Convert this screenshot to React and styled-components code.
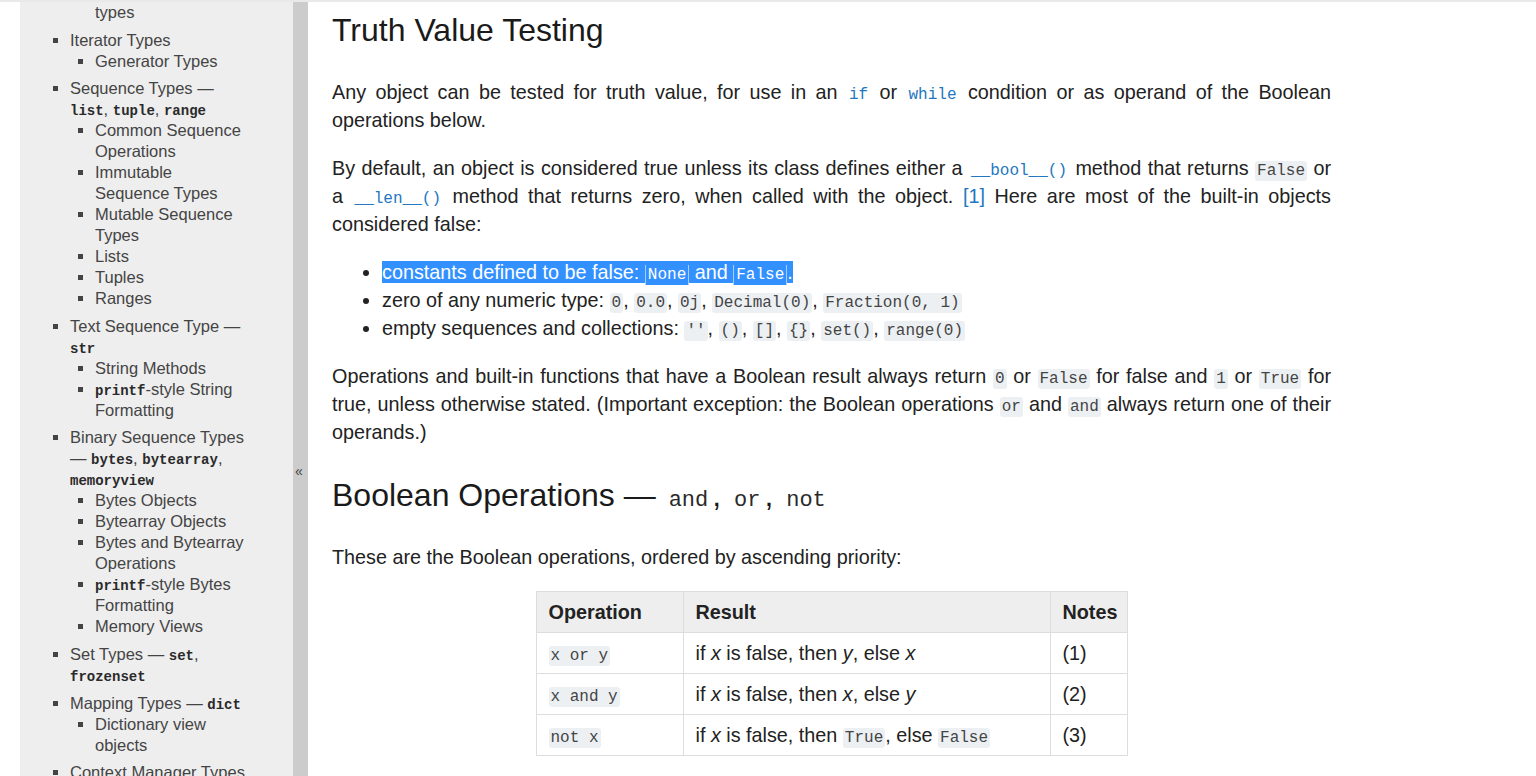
import React, { useLayoutEffect, useRef } from "react";
import styled, { createGlobalStyle } from "styled-components";

const GlobalStyle = createGlobalStyle`
  html, body { margin: 0; padding: 0; background: #ffffff; overflow: hidden; }
  body { font-family: "Liberation Sans", Arial, sans-serif; }
`;

const Page = styled.div`
  width: 100vw;
  height: 100vh;
  display: flex;
  flex-direction: column;
  overflow: hidden;
`;

const TopStrip = styled.div`
  height: 2px;
  flex: none;
  background: #e9e9e9;
`;

const Layout = styled.div`
  flex: 1;
  min-height: 0;
  display: flex;
  padding-left: 20px;
`;

const Sidebar = styled.nav`
  width: 273px;
  flex: none;
  box-sizing: border-box;
  background: #eeeeee;
  overflow: hidden;
  padding: 0 43px 0 10px;
  color: #444444;
  font-size: 16.5px;
  line-height: 21px;
`;

const TocList = styled.ul`
  margin: 0;
  padding-left: ${(p) => (p.$level === 0 ? "40px" : "25px")};
  list-style: square;
`;

const TocItem = styled.li`
  margin-top: ${(p) => (p.$spaced ? "6.6px" : "0")};
`;

const SideCode = styled.code`
  font-family: "Liberation Mono", "Courier New", monospace;
  font-size: 14px;
  line-height: 1;
  font-weight: 700;
  color: #2a2a2a;
`;

const CollapseBar = styled.div`
  width: 15px;
  flex: none;
  background: #cccccc;
  color: #444444;
  font-size: 14px;
  line-height: 16px;
  padding: 461px 0 0 2px;
  box-sizing: border-box;
`;

const Main = styled.main`
  flex: 1;
  min-width: 0;
  padding: 0 24px;
  overflow: hidden;
  color: #222222;
`;

const Body = styled.div`
  width: 999px;
`;

const Heading = styled.h1`
  font-size: 32px;
  font-weight: 400;
  line-height: 36px;
  color: #1a1a1a;
  margin: ${(p) => (p.$first ? "10px 0 30px" : "31px 0 30px")};
`;

const Para = styled.p`
  font-size: 19.8px;
  line-height: 28px;
  margin: 20px 0;
  text-align: justify;
`;

const BulletList = styled.ul`
  font-size: 19.8px;
  line-height: 28px;
  margin: 20px 0;
  padding-left: 50px;
  list-style: disc;
`;

const Code = styled.code`
  font-family: "Liberation Mono", "Courier New", monospace;
  font-size: 16px;
  line-height: 1;
  padding: 1px 2px;
  border-radius: 3px;
  background: ${(p) => (p.$bare ? "transparent" : "#ecf0f3")};
  color: ${(p) => (p.$bare ? "inherit" : "#444444")};
`;

const HeadCode = styled.code`
  font-family: "Liberation Mono", "Courier New", monospace;
  font-size: 22px;
  line-height: 1;
  padding: 0 4px;
  color: #2a2a2a;
`;

const Link = styled.a`
  color: #2277c0;
  text-decoration: none;
`;

const Selected = styled.span`
  background: #3390ff;
  color: #ffffff;
`;

const SelCode = styled.code`
  font-family: "Liberation Mono", "Courier New", monospace;
  font-size: 16px;
  line-height: 1;
  padding: 1px 2px;
  background: #3390ff;
  color: #ffffff;
  border-left: 1px solid #a8cdfb;
  border-right: 1px solid #a8cdfb;
`;

const Table = styled.table`
  margin: 20px auto;
  border-collapse: collapse;
  table-layout: fixed;
  width: 591px;
  border: 1px solid #dddddd;
  font-size: 19.8px;
  line-height: 28px;
`;

const Th = styled.th`
  width: ${(p) => p.$w - 25}px;
  background: #eeeeee;
  font-weight: 700;
  text-align: left;
  padding: 6px 12px;
  border: 1px solid #dddddd;
  white-space: nowrap;
  color: #222222;
`;

const Td = styled.td`
  padding: 6px 12px;
  border: 1px solid #dddddd;
  white-space: nowrap;
  vertical-align: middle;
`;

const c = (t) => <SideCode>{t}</SideCode>;

const toc = [
  {
    title: ["Numeric Types — ", c("int"), ", ", c("float"), ", ", c("complex")],
    children: [
      "Bitwise Operations on Integer Types",
      "Additional Methods on Integer Types",
      "Additional Methods on Float",
      "Hashing of numeric types",
    ],
  },
  { title: "Iterator Types", children: ["Generator Types"], anchor: true },
  {
    title: ["Sequence Types — ", c("list"), ", ", c("tuple"), ", ", c("range")],
    children: [
      "Common Sequence Operations",
      "Immutable Sequence Types",
      "Mutable Sequence Types",
      "Lists",
      "Tuples",
      "Ranges",
    ],
  },
  {
    title: ["Text Sequence Type — ", c("str")],
    children: ["String Methods", [c("printf"), "-style String Formatting"]],
  },
  {
    title: ["Binary Sequence Types — ", c("bytes"), ", ", c("bytearray"), ", ", c("memoryview")],
    children: [
      "Bytes Objects",
      "Bytearray Objects",
      "Bytes and Bytearray Operations",
      [c("printf"), "-style Bytes Formatting"],
      "Memory Views",
    ],
  },
  { title: ["Set Types — ", c("set"), ", ", c("frozenset")] },
  { title: ["Mapping Types — ", c("dict")], children: ["Dictionary view objects"] },
  { title: "Context Manager Types" },
  {
    title: "Type Annotation Types — Generic Alias, Union",
    children: ["Generic Alias Type", "Union Type"],
  },
  {
    title: "Other Built-in Types",
    children: ["Modules", "Classes and Class Instances", "Functions", "Methods", "Code Objects"],
  },
  { title: "Special Attributes" },
];

function Frag({ v }) {
  if (Array.isArray(v)) return v.map((x, i) => <React.Fragment key={i}>{x}</React.Fragment>);
  return v;
}

export default function App() {
  const navRef = useRef(null);
  const anchorRef = useRef(null);

  useLayoutEffect(() => {
    const nav = navRef.current;
    const a = anchorRef.current;
    if (!nav || !a) return;
    const offset = a.getBoundingClientRect().top - nav.getBoundingClientRect().top + nav.scrollTop;
    nav.scrollTop = Math.round(offset - 28);
  }, []);

  return (
    <>
      <GlobalStyle />
      <Page>
        <TopStrip />
        <Layout>
          <Sidebar ref={navRef}>
            <TocList $level={0}>
              {toc.map((item, i) => (
                <TocItem
                  key={i}
                  $spaced={i > 0}
                  ref={item.anchor ? anchorRef : undefined}
                >
                  <Frag v={item.title} />
                  {item.children && (
                    <TocList $level={1}>
                      {item.children.map((ch, j) => (
                        <TocItem key={j}>
                          <Frag v={ch} />
                        </TocItem>
                      ))}
                    </TocList>
                  )}
                </TocItem>
              ))}
            </TocList>
          </Sidebar>
          <CollapseBar>«</CollapseBar>
          <Main>
            <Body>
              <Heading $first>Truth Value Testing</Heading>
              <Para>
                Any object can be tested for truth value, for use in an{" "}
                <Link href="#"><Code $bare>if</Code></Link> or{" "}
                <Link href="#"><Code $bare>while</Code></Link> condition or as operand of the
                Boolean operations below.
              </Para>
              <Para>
                By default, an object is considered true unless its class defines either a{" "}
                <Link href="#"><Code $bare>__bool__()</Code></Link> method that returns{" "}
                <Code>False</Code> or a{"\u00a0"}
                <Link href="#"><Code $bare>__len__()</Code></Link> method that returns zero, when
                called with the object. <Link href="#">[1]</Link> Here are most of the built-in
                objects considered false:
              </Para>
              <BulletList>
                <li>
                  <Selected>
                    constants defined to be false: <SelCode>None</SelCode> and{" "}
                    <SelCode>False</SelCode>.
                  </Selected>
                </li>
                <li>
                  zero of any numeric type: <Code>0</Code>, <Code>0.0</Code>, <Code>0j</Code>,{" "}
                  <Code>Decimal(0)</Code>, <Code>Fraction(0, 1)</Code>
                </li>
                <li>
                  empty sequences and collections: <Code>''</Code>, <Code>()</Code>,{" "}
                  <Code>[]</Code>, <Code>{"{}"}</Code>, <Code>set()</Code>, <Code>range(0)</Code>
                </li>
              </BulletList>
              <Para>
                Operations and built-in functions that have a Boolean result always return{" "}
                <Code>0</Code> or <Code>False</Code> for false and <Code>1</Code> or{" "}
                <Code>True</Code> for true, unless otherwise stated. (Important exception: the
                Boolean operations <Code>or</Code> and <Code>and</Code> always return one of their
                operands.)
              </Para>
              <Heading as="h2">
                Boolean Operations — <HeadCode>and</HeadCode>, <HeadCode>or</HeadCode>,{" "}
                <HeadCode>not</HeadCode>
              </Heading>
              <Para>These are the Boolean operations, ordered by ascending priority:</Para>
              <Table>
                <thead>
                  <tr>
                    <Th $w={147}>Operation</Th>
                    <Th $w={367}>Result</Th>
                    <Th $w={77}>Notes</Th>
                  </tr>
                </thead>
                <tbody>
                  <tr>
                    <Td><Code>x or y</Code></Td>
                    <Td>if <em>x</em> is false, then <em>y</em>, else <em>x</em></Td>
                    <Td>(1)</Td>
                  </tr>
                  <tr>
                    <Td><Code>x and y</Code></Td>
                    <Td>if <em>x</em> is false, then <em>x</em>, else <em>y</em></Td>
                    <Td>(2)</Td>
                  </tr>
                  <tr>
                    <Td><Code>not x</Code></Td>
                    <Td>if <em>x</em> is false, then <Code>True</Code>, else <Code>False</Code></Td>
                    <Td>(3)</Td>
                  </tr>
                </tbody>
              </Table>
            </Body>
          </Main>
        </Layout>
      </Page>
    </>
  );
}
